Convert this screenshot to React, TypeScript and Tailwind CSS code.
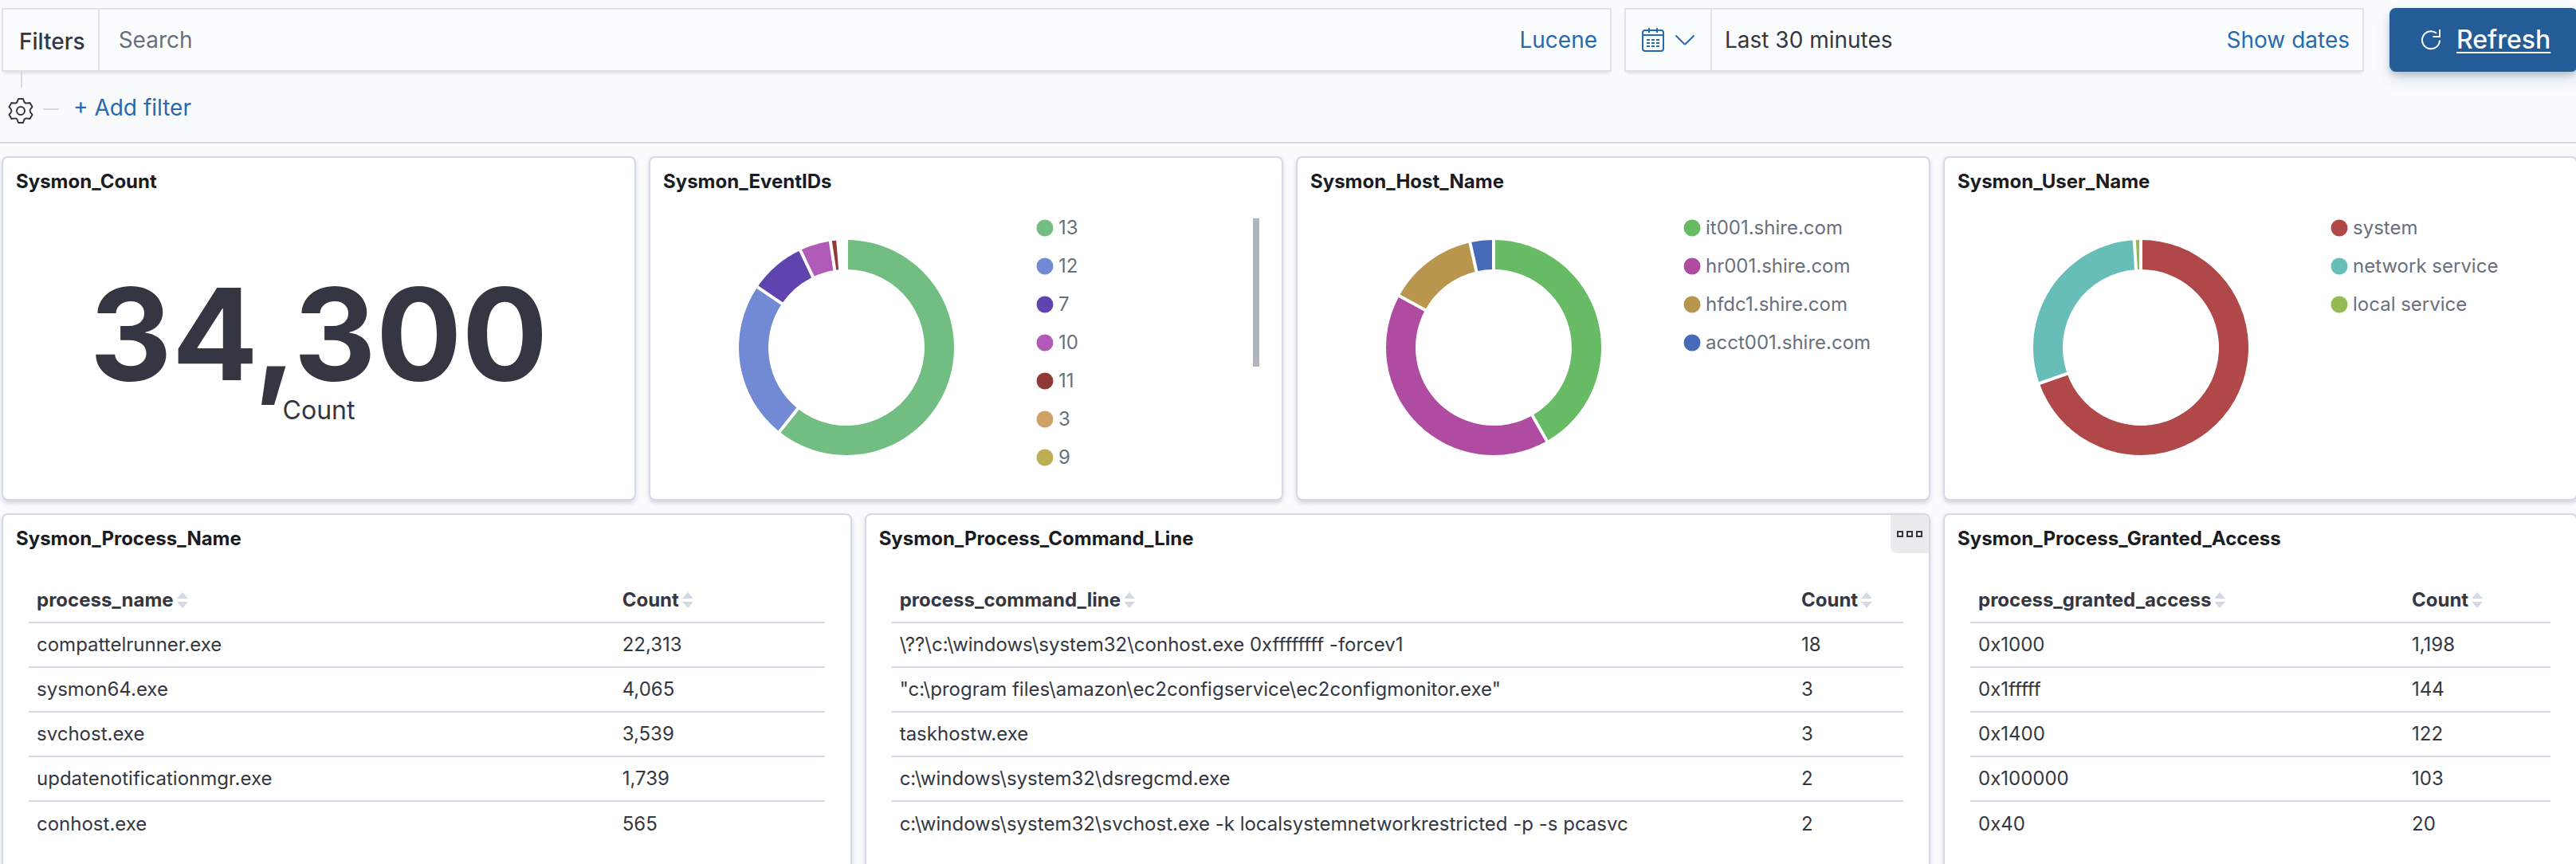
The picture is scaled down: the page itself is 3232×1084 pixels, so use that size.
import React from "react";

type Slice = { label: string; color: string; end: number };

const eventIds: Slice[] = [
  { label: "13", color: "#72be82", end: 218.5 },
  { label: "12", color: "#7289d3", end: 304.2 },
  { label: "7", color: "#5f43af", end: 334.6 },
  { label: "10", color: "#b05bb8", end: 351.4 },
  { label: "11", color: "#8f3a36", end: 355.4 },
  { label: "3", color: "#d0a067", end: 356.6 },
  { label: "9", color: "#bcae54", end: 357.6 },
];

const hosts: Slice[] = [
  { label: "it001.shire.com", color: "#67bb64", end: 150.3 },
  { label: "hr001.shire.com", color: "#af4ca1", end: 298.7 },
  { label: "hfdc1.shire.com", color: "#b8964d", end: 347.3 },
  { label: "acct001.shire.com", color: "#476ab8", end: 360 },
];

const users: Slice[] = [
  { label: "system", color: "#b0484a", end: 250.5 },
  { label: "network service", color: "#67bdb7", end: 356.5 },
  { label: "local service", color: "#93bb52", end: 360 },
];

function point(radius: number, degrees: number) {
  const a = (degrees * Math.PI) / 180;
  return `${(136 + radius * Math.sin(a)).toFixed(2)} ${(136 - radius * Math.cos(a)).toFixed(2)}`;
}

function slicePath(start: number, end: number) {
  const large = end - start > 180 ? 1 : 0;
  const outer = 135;
  const inner = 98;
  return `M${point(outer, start)}A${outer} ${outer} 0 ${large} 1 ${point(outer, end)}L${point(inner, end)}A${inner} ${inner} 0 ${large} 0 ${point(inner, start)}Z`;
}

function Donut({ slices, name }: { slices: Slice[]; name: string }) {
  const shapes = slices.map((s, i) => ({ ...s, start: i === 0 ? 0 : slices[i - 1].end }));
  return (
    <svg viewBox="0 0 272 272" className="size-[272px]" role="img" aria-label={name}>
      {shapes
        .filter((s) => s.end - s.start > 2)
        .map((s) => (
          <path key={s.label} d={slicePath(s.start, s.end)} fill={s.color} />
        ))}
      {[0, ...shapes.map((s) => s.end)].map((angle) => (
        <path key={angle} d={`M${point(90, angle)}L${point(136, angle)}`} stroke="#fff" strokeWidth="4" />
      ))}
    </svg>
  );
}

function Panel({
  title,
  className,
  children,
  menu,
}: {
  title: string;
  className: string;
  children: React.ReactNode;
  menu?: boolean;
}) {
  return (
    <section
      className={`relative flex flex-col rounded-lg border-2 border-[#d3dae6] bg-white shadow-[0_4px_4px_-1px_rgba(152,162,179,0.3),0_2px_10px_-2px_rgba(152,162,179,0.3)] ${className}`}
    >
      <h2 className="px-4 pt-3 pb-2.5 text-2xl leading-9 font-bold text-[#1a1c21]">{title}</h2>
      {menu && (
        <button
          type="button"
          aria-label="Panel options"
          className="absolute top-0 right-0 flex h-12 w-12 items-center justify-center gap-1 rounded-tr-md rounded-bl-lg bg-[#e9ebed]"
        >
          <span className="size-2 border-2 border-[#343741]" />
          <span className="size-2 border-2 border-[#343741]" />
          <span className="size-2 border-2 border-[#343741]" />
        </button>
      )}
      {children}
    </section>
  );
}

function DonutPanel({ title, slices, scroll }: { title: string; slices: Slice[]; scroll?: boolean }) {
  return (
    <Panel title={title} className="col-span-3">
      <div className="flex h-[360px] pl-[110px]">
        <div className="flex w-[374px] shrink-0 items-center">
          <Donut slices={slices} name={title} />
        </div>
        <ul className="flex-1 pt-1.5">
          {slices.map((s) => (
            <li key={s.label} className="h-12">
              <button type="button" className="flex items-center gap-1.5 text-2xl leading-12 text-[#69707d]">
                <svg viewBox="0 0 22 22" className="size-[22px]" aria-hidden="true">
                  <circle cx="11" cy="11" r="10.5" fill={s.color} />
                </svg>
                {s.label}
              </button>
            </li>
          ))}
        </ul>
        {scroll && <div className="mt-[18px] mr-7 h-[186px] w-2 bg-[#b1b5bc]" />}
      </div>
    </Panel>
  );
}

function SortIcon() {
  return (
    <svg viewBox="0 0 14 20" className="h-5 w-3.5" fill="#d3dae6" aria-hidden="true">
      <path d="M7 0L14 8H0ZM7 20L14 12H0Z" />
    </svg>
  );
}

function CountTable({
  column,
  rows,
  countWidth,
}: {
  column: string;
  rows: [string, string][];
  countWidth: string;
}) {
  return (
    <div className="px-8 pt-[21px] pb-40">
      <table className="w-full table-fixed text-left text-2xl text-[#343741]">
        <thead>
          <tr className="h-14 border-b-2 border-[#d3dae6]">
            <th scope="col" className="px-2.5 font-bold">
              <button type="button" className="flex items-center gap-1">
                {column}
                <SortIcon />
              </button>
            </th>
            <th scope="col" className={`px-2.5 font-bold ${countWidth}`}>
              <button type="button" className="flex items-center gap-1">
                Count
                <SortIcon />
              </button>
            </th>
          </tr>
        </thead>
        <tbody>
          {rows.map(([name, count]) => (
            <tr key={name} className="h-14 border-b-2 border-[#d3dae6] last:border-0">
              <td className="px-2.5 whitespace-nowrap">{name}</td>
              <td className="px-2.5">{count}</td>
            </tr>
          ))}
        </tbody>
      </table>
    </div>
  );
}

function GearIcon() {
  return (
    <svg viewBox="0 0 32 32" className="size-8" fill="none" stroke="#343741" strokeWidth="2" strokeLinejoin="round" aria-hidden="true">
      <path d="M13 1H19L20.3 4.8Q21.4 6.8 23.5 6.4L27.5 5.9L30.5 11.1L28.2 14Q26.8 16 28.2 18L30.5 20.9L27.5 26.1L23.5 25.6Q21.4 25.2 20.3 27.2L19 31H13L11.7 27.2Q10.6 25.2 8.5 25.6L4.5 26.1L1.5 20.9L3.8 18Q5.2 16 3.8 14L1.5 11.1L4.5 5.9L8.5 6.4Q10.6 6.8 11.7 4.8Z" />
      <circle cx="16" cy="16" r="5" />
    </svg>
  );
}

function CalendarIcon() {
  return (
    <svg viewBox="0 0 28 30" className="h-[30px] w-7" fill="none" stroke="#266ab0" strokeWidth="2" aria-hidden="true">
      <rect x="1" y="3" width="26" height="26" rx="3" />
      <path d="M1 9H27M9 0V6M19 0V6M6 15H10M12 15H16M18 15H22M6 19H10M12 19H16M18 19H22M6 23H10M12 23H16M18 23H22" />
    </svg>
  );
}

function ChevronIcon() {
  return (
    <svg viewBox="0 0 24 13" className="h-[13px] w-6" fill="none" stroke="#266ab0" strokeWidth="2" strokeLinecap="round" strokeLinejoin="round" aria-hidden="true">
      <path d="M1 1L10.8 10.8Q12 12 13.2 10.8L23 1" />
    </svg>
  );
}

function RefreshIcon() {
  return (
    <svg viewBox="0 0 24 26" className="h-[26px] w-6" fill="none" stroke="#fff" strokeWidth="2" aria-hidden="true">
      <path d="M19 4.8A11 11 0 1 0 23 13.5M23 0V9H14.5" />
    </svg>
  );
}

const boxClass =
  "flex h-20 border-2 border-[#e0e2e5] bg-[#fbfcfd] shadow-[0_4px_4px_-2px_rgba(152,162,179,0.3)]";

export default function App() {
  return (
    <div className="h-screen overflow-hidden bg-[#fafbfd] font-['Inter',sans-serif] text-[#343741]">
      <div className="-mr-0.5">
        <header className="border-b-2 border-[#d3dae6] pt-2.5 pl-0.5 text-[28px] leading-9">
          <div className="flex">
            <form className={`${boxClass} flex-1`} onSubmit={(e) => e.preventDefault()}>
              <label
                htmlFor="query"
                className="flex items-center border-r-2 border-[#e0e2e5] pt-1 pr-4 pl-5 font-medium"
              >
                Filters
              </label>
              <input
                id="query"
                type="text"
                placeholder="Search"
                className="min-w-0 flex-1 px-6 outline-none placeholder:text-[#69707d]"
              />
              <button type="button" className="px-4 text-[#266ab0]">
                Lucene
              </button>
            </form>
            <div className={`${boxClass} ml-4 w-[928px]`}>
              <button
                type="button"
                aria-label="Date quick select"
                className="flex w-[108px] items-center gap-3.5 border-r-2 border-[#e0e2e5] pl-5"
              >
                <CalendarIcon />
                <ChevronIcon />
              </button>
              <button type="button" className="flex-1 px-4 text-left">
                Last 30 minutes
              </button>
              <button type="button" className="px-4 text-[#266ab0]">
                Show dates
              </button>
            </div>
            <button
              type="button"
              className="ml-8 flex h-20 w-[236px] items-center gap-5 rounded-lg bg-[#235c97] pl-10 text-[32px] font-medium text-white shadow-[0_4px_8px_-1px_rgba(54,97,126,0.3),0_10px_20px_-2px_rgba(54,97,126,0.2)]"
            >
              <RefreshIcon />
              <span className="underline decoration-2 underline-offset-4">Refresh</span>
            </button>
          </div>
          <div className="flex h-[88px] flex-col">
            <div className="ml-6 h-5 w-0.5 bg-[#d3dae6]" />
            <div className="mt-[5px] flex items-center pl-2">
              <button type="button" aria-label="Filter options" className="pt-2">
                <GearIcon />
              </button>
              <span className="mt-1 ml-3 h-0.5 w-5 bg-[#d3dae6]" />
              <button type="button" className="ml-[18px] text-[#266ab0]">
                + Add filter
              </button>
            </div>
          </div>
        </header>
        <main className="grid grid-cols-12 gap-4 pt-4 pl-0.5">
          <Panel title="Sysmon_Count" className="col-span-3">
            <div className="flex h-[370px] flex-col items-center justify-center pb-3">
              <div className="text-[160px] leading-none font-bold">34,300</div>
              <div className="text-[32px] leading-none">Count</div>
            </div>
          </Panel>
          <DonutPanel title="Sysmon_EventIDs" slices={eventIds} scroll />
          <DonutPanel title="Sysmon_Host_Name" slices={hosts} />
          <DonutPanel title="Sysmon_User_Name" slices={users} />
          <Panel title="Sysmon_Process_Name" className="col-span-4">
            <CountTable
              column="process_name"
              countWidth="w-[264px]"
              rows={[
                ["compattelrunner.exe", "22,313"],
                ["sysmon64.exe", "4,065"],
                ["svchost.exe", "3,539"],
                ["updatenotificationmgr.exe", "1,739"],
                ["conhost.exe", "565"],
              ]}
            />
          </Panel>
          <Panel title="Sysmon_Process_Command_Line" className="col-span-5" menu>
            <CountTable
              column="process_command_line"
              countWidth="w-[138px]"
              rows={[
                ["\\??\\c:\\windows\\system32\\conhost.exe 0xffffffff -forcev1", "18"],
                ['"c:\\program files\\amazon\\ec2configservice\\ec2configmonitor.exe"', "3"],
                ["taskhostw.exe", "3"],
                ["c:\\windows\\system32\\dsregcmd.exe", "2"],
                ["c:\\windows\\system32\\svchost.exe -k localsystemnetworkrestricted -p -s pcasvc", "2"],
              ]}
            />
          </Panel>
          <Panel title="Sysmon_Process_Granted_Access" className="col-span-3">
            <CountTable
              column="process_granted_access"
              countWidth="w-[184px]"
              rows={[
                ["0x1000", "1,198"],
                ["0x1fffff", "144"],
                ["0x1400", "122"],
                ["0x100000", "103"],
                ["0x40", "20"],
              ]}
            />
          </Panel>
        </main>
      </div>
    </div>
  );
}
